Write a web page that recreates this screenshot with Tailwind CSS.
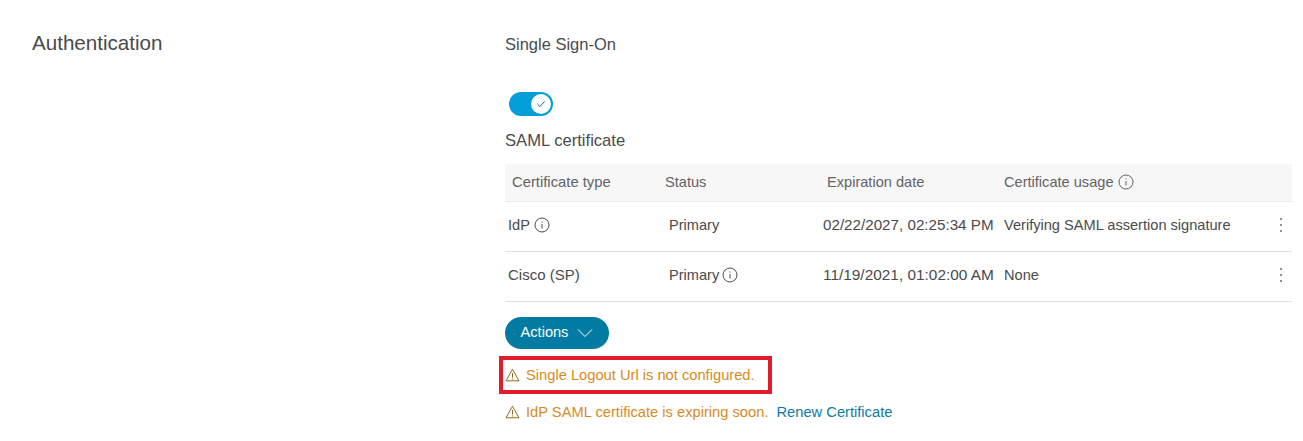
<!DOCTYPE html>
<html lang="en">
<head>
  <meta charset="UTF-8">
  <title>Authentication</title>
  <script src="https://cdn.jsdelivr.net/npm/@tailwindcss/browser@4"></script>
</head>
<body class="bg-white font-['Liberation_Sans',sans-serif] text-[#4a4a4d] h-[441px] overflow-hidden">
  <main class="flex">
    <!-- Left column -->
    <div class="w-[505px] shrink-0 pl-8 pt-[31px]">
      <h2 class="text-[20.6px] leading-6">Authentication</h2>
    </div>

    <!-- Right column -->
    <div class="w-[787px] pt-[35px]">
      <h3 class="text-[16.5px] leading-[18px]">Single Sign-On</h3>

      <!-- Toggle -->
      <div class="mt-[39px] ml-1 w-11 h-6 rounded-full bg-[#049fd9] flex items-center justify-end pr-[2px]">
        <div class="w-5 h-5 rounded-full bg-white flex items-center justify-center">
          <svg class="w-3 h-3 text-[#1f5f80]" viewBox="0 0 12 12" fill="none" stroke="currentColor" stroke-width="1"><path d="M2.5 6.2l2.4 2.3 4.6-5"/></svg>
        </div>
      </div>

      <h3 class="mt-[16px] text-[16.6px] leading-[18px]">SAML certificate</h3>

      <!-- Table -->
      <div class="mt-[14px] text-[14.6px] leading-5">
        <div class="grid grid-cols-[153px_162px_177px_1fr] items-center h-[38px] pb-[1px] bg-[#f7f7f7] border-b border-[#e8ebf1] text-[#636366]">
          <div class="pl-[7px] text-[14.8px]">Certificate type</div>
          <div class="pl-[7px]">Status</div>
          <div class="pl-[7px]">Expiration date</div>
          <div class="pl-[7px] flex items-center gap-[4px]">
            Certificate usage
            <svg class="w-4 h-4" viewBox="0 0 16 16" fill="none" stroke="currentColor"><circle cx="8" cy="8" r="7"/><path d="M8 7v4.5M8 4.5v1"/></svg>
          </div>
        </div>
        <div class="grid grid-cols-[153px_162px_177px_1fr] items-center h-[50px] pb-[3px] border-b border-[#dfdfdf]">
          <div class="pl-[3px] flex items-center gap-[4px]">
            IdP
            <svg class="w-4 h-4" viewBox="0 0 16 16" fill="none" stroke="currentColor"><circle cx="8" cy="8" r="7"/><path d="M8 7v4.5M8 4.5v1"/></svg>
          </div>
          <div class="pl-[11px]">Primary</div>
          <div class="pl-[3px] text-[15.2px]">02/22/2027, 02:25:34 PM</div>
          <div class="pl-[7px] flex items-center justify-between pr-[9px]">
            Verifying SAML assertion signature
            <svg class="w-[4px] h-[16px] text-[#6b6b6e]" viewBox="0 0 4 16" fill="currentColor"><circle cx="2" cy="2" r="1"/><circle cx="2" cy="8" r="1"/><circle cx="2" cy="14" r="1"/></svg>
          </div>
        </div>
        <div class="grid grid-cols-[153px_162px_177px_1fr] items-center h-[50px] pb-[3px] border-b border-[#dfdfdf]">
          <div class="pl-[3px] text-[15px]">Cisco (SP)</div>
          <div class="pl-[11px] flex items-center gap-[3px]">
            Primary
            <svg class="w-4 h-4" viewBox="0 0 16 16" fill="none" stroke="currentColor"><circle cx="8" cy="8" r="7"/><path d="M8 7v4.5M8 4.5v1"/></svg>
          </div>
          <div class="pl-[3px] text-[15.4px]">11/19/2021, 01:02:00 AM</div>
          <div class="pl-[7px] flex items-center justify-between pr-[9px]">
            None
            <svg class="w-[4px] h-[16px] text-[#6b6b6e]" viewBox="0 0 4 16" fill="currentColor"><circle cx="2" cy="2" r="1"/><circle cx="2" cy="8" r="1"/><circle cx="2" cy="14" r="1"/></svg>
          </div>
        </div>
      </div>

      <button class="mt-[15px] w-[104px] h-8 pb-[1px] rounded-full bg-[#027ba3] text-white text-[14.6px] flex items-center justify-center gap-[9px]">
        Actions
        <svg class="w-[16px] h-[10px]" viewBox="0 0 16 10" fill="none" stroke="currentColor"><path d="M1 1.5l7 7 7-7"/></svg>
      </button>

      <!-- Warnings -->
      <div class="relative mt-[17px] h-[20px] pb-[2px] flex items-center gap-[6px] text-[14.7px] text-[#d68b22]">
        <svg class="w-[15px] h-[14px] text-[#8f6a1f]" viewBox="0 0 15 14" fill="none" stroke="currentColor"><path d="M7.5 1.2L14 12.8H1z"/><path d="M7.5 5v4.5M7.5 10.5v1"/></svg>
        Single Logout Url is not configured.
        <div class="absolute -left-[6px] -top-[10px] w-[273px] h-[38px] border-4 border-[#e31b2b]"></div>
      </div>
      <div class="mt-[17px] h-[20px] pb-[2px] flex items-center gap-[6px] text-[14.7px] text-[#d68b22]">
        <svg class="w-[15px] h-[14px] text-[#8f6a1f]" viewBox="0 0 15 14" fill="none" stroke="currentColor"><path d="M7.5 1.2L14 12.8H1z"/><path d="M7.5 5v4.5M7.5 10.5v1"/></svg>
        IdP SAML certificate is expiring soon.
        <a href="#" class="text-[#0d7ba3] ml-[2px]">Renew Certificate</a>
      </div>
    </div>
  </main>
</body>
</html>
